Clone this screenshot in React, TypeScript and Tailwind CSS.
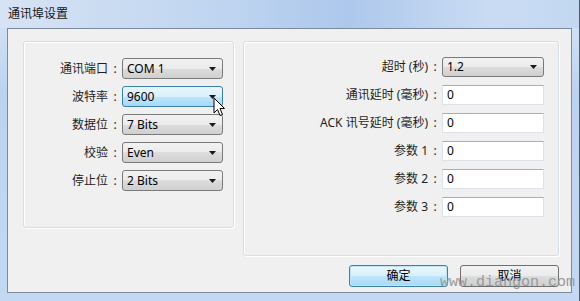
import React from 'react'

const font = { fontFamily: '"Noto Sans", "Noto Sans CJK SC", sans-serif' }

const Arrow = () => (
  <svg width="7" height="4" viewBox="0 0 7 4" className="shrink-0">
    <path d="M0 0 L7 0 L3.5 4 Z" fill="#1a1a1a" />
  </svg>
)

const Select: React.FC<{ value: string; width: string; hot?: boolean; height: string }> = ({ value, width, hot, height }) => (
  <div
    className={`${width} ${height} flex items-center justify-between pl-[4px] pr-[6px] rounded-[3px] border ${
      hot
        ? 'border-[#3c7fb1] bg-[linear-gradient(#eaf6fd_0%,#d9f0fc_50%,#bee6fd_50%,#a7d9f5_100%)]'
        : 'border-[#7a7a7a] bg-[linear-gradient(#f2f2f2_0%,#ebebeb_50%,#dddddd_50%,#cfcfcf_100%)]'
    }`}
  >
    <span className="text-[12px] text-black leading-none">{value}</span>
    <Arrow />
  </div>
)

const Input: React.FC<{ value: string }> = ({ value }) => (
  <div className="w-[102px] h-[20px] flex items-center pl-[4px] bg-white border border-[#dde2e8] border-t-[#abadb3]">
    <span className="text-[12px] text-black leading-none">{value}</span>
  </div>
)

const Row: React.FC<{ label: string; labelWidth: string; children: React.ReactNode; height: string }> = ({ label, labelWidth, children, height }) => (
  <div className={`flex items-center ${height}`}>
    <span className={`${labelWidth} text-right text-[12px] text-[#1e1e1e] whitespace-nowrap`}>{label}</span>
    <span className="w-[14px] text-center text-[12px] text-[#1e1e1e]">:</span>
    {children}
  </div>
)

export default function App() {
  const left = [
    { label: '通讯端口', value: 'COM 1' },
    { label: '波特率', value: '9600', hot: true },
    { label: '数据位', value: '7 Bits' },
    { label: '校验', value: 'Even' },
    { label: '停止位', value: '2 Bits' },
  ]
  const right = ['通讯延时 (毫秒)', 'ACK 讯号延时 (毫秒)', '参数 1', '参数 2', '参数 3']

  return (
    <div
      className="relative w-[580px] h-[301px] overflow-hidden flex flex-col bg-[linear-gradient(#d9e6f6,#bcd3f0_30%,#c3d8f2)] border-r border-[#4d5a6a]"
      style={font}
    >
      {/* title */}
      <div className="h-[28px] flex items-center pl-[8px] bg-[linear-gradient(90deg,#d6e3f4_0%,#bed4f0_40%,#adc8ec_60%,#cadcf3_85%,#c2d7f1_100%)]">
        <span className="text-[12px] text-[#151515]">通讯埠设置</span>
      </div>

      {/* client */}
      <div className="ml-[7px] w-[565px] h-[265px] bg-[#f0f0f0] border border-[#7d8a9a] flex gap-[9px] pl-[15px] pt-[12px]">
        <div className="w-[211px] h-[187px] rounded-[3px] border border-[#d5dfe5] shadow-[inset_1px_1px_0_#ffffff,1px_1px_0_#ffffff] pt-[16px] flex flex-col gap-[7px]">
          {left.map((r) => (
            <Row key={r.label} label={r.label} labelWidth="w-[84px]" height="h-[21px]">
              <Select value={r.value} width="w-[101px]" height="h-[21px]" hot={r.hot} />
            </Row>
          ))}
        </div>

        <div className="w-[316px] flex flex-col">
          <div className="h-[215px] rounded-[3px] border border-[#d5dfe5] shadow-[inset_1px_1px_0_#ffffff,1px_1px_0_#ffffff] pt-[15px] flex flex-col gap-[8px]">
            <Row label="超时 (秒)" labelWidth="w-[184px]" height="h-[20px]">
              <Select value="1.2" width="w-[102px]" height="h-[20px]" />
            </Row>
            {right.map((l) => (
              <Row key={l} label={l} labelWidth="w-[184px]" height="h-[20px]">
                <Input value="0" />
              </Row>
            ))}
          </div>
          <div className="mt-[9px] flex justify-end gap-[12px]">
            <button className="w-[99px] h-[22px] rounded-[3px] border border-[#3c7fb1] bg-[linear-gradient(#eaf6fd_0%,#d9f0fc_50%,#bee6fd_50%,#a7d9f5_100%)] shadow-[inset_0_0_0_1px_#bfe5fb] text-[12px] text-black">
              确定
            </button>
            <button className="w-[99px] h-[22px] rounded-[3px] border border-[#707070] bg-[linear-gradient(#f2f2f2_0%,#ebebeb_50%,#dddddd_50%,#cfcfcf_100%)] text-[12px] text-black">
              取消
            </button>
          </div>
        </div>
      </div>

      {/* mouse pointer */}
      <svg className="absolute left-[213px] top-[97px]" width="13" height="21" viewBox="0 0 13 21">
        <path d="M1 1 L1 16 L4.5 12.5 L7 18.5 L9.5 17.5 L7 11.5 L11.5 11.5 Z" fill="#ffffff" stroke="#000000" strokeWidth="1" strokeLinejoin="round" />
      </svg>

      {/* watermark */}
      <span className="absolute left-[440px] top-[275px] text-[15px] text-[#9a9a9a] leading-none" style={{ fontFamily: '"Liberation Mono", monospace' }}>
        www.diangon.com
      </span>
    </div>
  )
}
